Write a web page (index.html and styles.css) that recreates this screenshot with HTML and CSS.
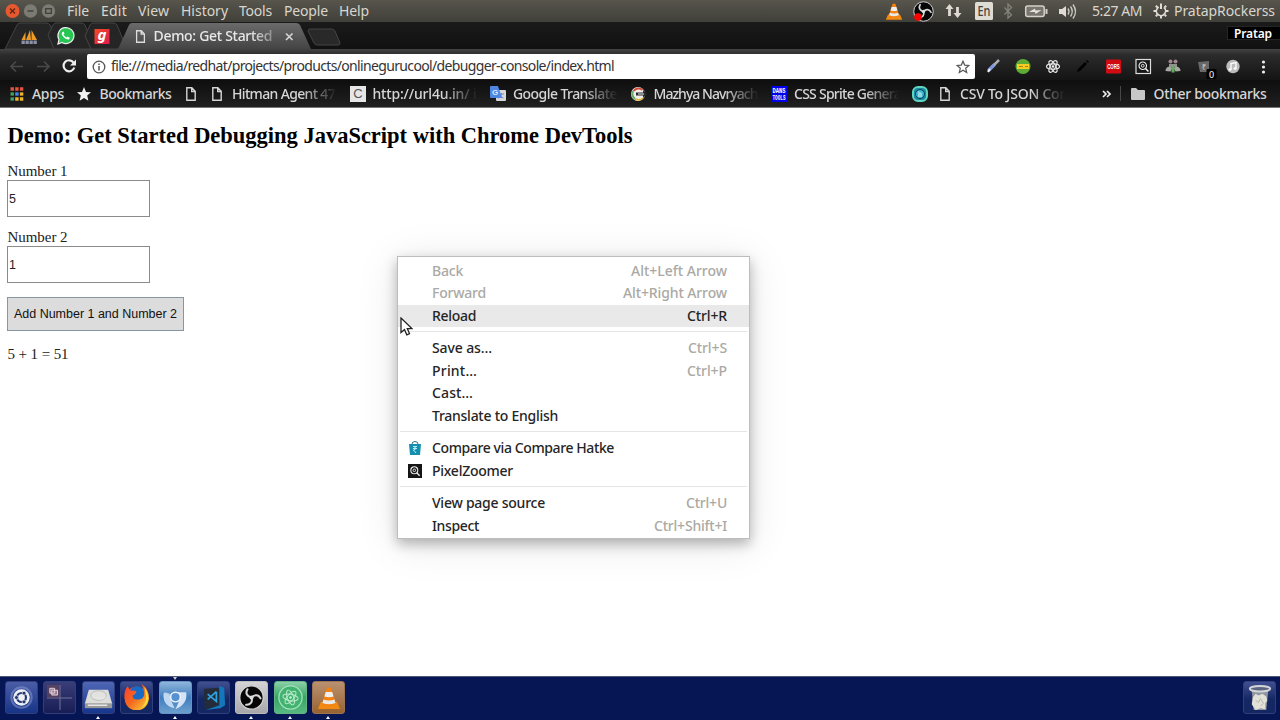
FILE: index.html
```html
<!DOCTYPE html>
<html lang="en">
<head>
<meta charset="utf-8">
<title>Demo: Get Started Debugging JavaScript with Chrome DevTools</title>
<link rel="stylesheet" href="styles.css">
</head>
<body>
<svg class="defs" width="0" height="0">
  <defs>
    <linearGradient id="tabfill" x1="0" y1="0" x2="0" y2="1"><stop offset="0" stop-color="#6b6b6b"/><stop offset="1" stop-color="#444"/></linearGradient>
    <linearGradient id="cream" x1="0" y1="0" x2="1" y2="1"><stop offset="0" stop-color="#ff3b2f"/><stop offset=".5" stop-color="#f36a20"/><stop offset="1" stop-color="#ffd83a"/></linearGradient>
    <linearGradient id="gaana" x1="0" y1="0" x2="1" y2="1"><stop offset="0" stop-color="#f04a23"/><stop offset="1" stop-color="#e01a52"/></linearGradient>
  </defs>
  <symbol id="file" viewBox="0 0 10 14"><path d="M.8.8h5L9.2 4.3v8.9H.8zM5.7.8v3.7h3.5" fill="none" stroke="currentColor" stroke-width="1.4"/></symbol>
  <symbol id="cone" viewBox="0 0 24 24"><path d="M4 16h16l3 7H1z" fill="#f28a12"/><path d="M10 2q2-1.5 4 0l5 16q-7 4-14 0z" fill="#f48110"/><path d="M8.8 6h6.4l1.4 4.5q-4.6 1.5-9.2 0z" fill="#eee"/><path d="M6.5 13.5q5.5 2 11 0l1 3.5q-6.500 2.500-13 0z" fill="#e8e8e4"/></symbol>
  <symbol id="obs" viewBox="0 0 28 28"><circle cx="14" cy="14" r="13" fill="#060606" stroke="#d5d5d5" stroke-width="1.3"/><g fill="none" stroke="#d6d6d6" stroke-width="2.300" stroke-linecap="round"><path d="M14 14C9 13 7 9 9.500 5M14 14C17.400 10.200 22 10.700 24 15M14 14C15.600 19 12.600 22.500 8 22"/></g><circle cx="14" cy="14" r="2.300" fill="#ddd"/></symbol>
  <symbol id="zoomer" viewBox="0 0 16 16"><circle cx="7.200" cy="7.200" r="4" fill="none" stroke="currentColor" stroke-width="1.200"/><circle cx="7.200" cy="7.200" r="1.500" fill="none" stroke="currentColor"/><path d="M10 10l3.300 3.300" stroke="currentColor" stroke-width="1.600"/></symbol>
</svg>

<header class="menubar">
  <svg class="winctl" width="60" height="22" viewBox="0 0 60 22">
    <circle cx="12.500" cy="11" r="7" fill="#e8582f"/><path d="M10 8.500l5 5m0-5l-5 5" stroke="#5e2614" stroke-width="1.300"/>
    <circle cx="30.500" cy="11" r="6.700" fill="#7c7b73"/><path d="M27.500 11h6" stroke="#3b3a36" stroke-width="1.300"/>
    <circle cx="48.500" cy="11" r="6.700" fill="#7c7b73"/><rect x="45.700" y="8.700" width="5.600" height="4.600" fill="none" stroke="#3b3a36" stroke-width="1.200"/>
  </svg>
  <nav class="menus">
    <span class="c34"><b data-w="22">File</b></span><span class="c37"><b data-w="26">Edit</b></span><span class="c43"><b data-w="31">View</b></span><span class="c58"><b data-w="47">History</b></span><span class="c45"><b data-w="33">Tools</b></span><span class="c55"><b data-w="44">People</b></span><span><b data-w="30">Help</b></span>
  </nav>
  <svg class="tray" width="200" height="22" viewBox="884 0 200 22">
    <use href="#cone" x="885" y="2" width="18" height="19"/>
    <use href="#obs" x="913" y="1" width="21" height="21"/><circle cx="918" cy="17" r="3.800" fill="#f00"/>
    <path d="M949.500 4l-4 5h2.600v7h2.800V9h2.600zM957.500 18l-4-5h2.600V7h2.800v6h2.600z" fill="#dfdbd2"/>
    <rect x="975" y="2" width="18" height="18" rx="1.500" fill="#dfdcd3"/><text x="984" y="16" text-anchor="middle" class="en" textLength="13" lengthAdjust="spacingAndGlyphs">En</text>
    <path d="M1004.500 7.500l7 7.500-3.500 3V4l3.500 3.500-7 7" fill="none" stroke="#858379" stroke-width="1.300"/>
    <rect x="1025.700" y="6" width="18.500" height="10.500" rx="2" fill="#77756d" stroke="#d4d1c8" stroke-width="1.500"/><path d="M1046.500 9v5" stroke="#d4d1c8" stroke-width="2"/><path d="M1029 12l6-3.500.5 2 6-.5-6 4-.5-2z" fill="#e5e2da"/>
    <path d="M1059 9h3l4-3v11l-4-3h-3z" fill="#dfdbd2"/><path d="M1068 8.500q2 3 0 6M1070.500 6.500q3.500 5 0 10M1073 4.500q5 7 0 14" fill="none" stroke="#cbc8bf" stroke-width="1.400"/>
  </svg>
  <span class="clock"><b data-w="50">5:27 AM</b></span>
  <svg class="gear" width="16" height="16" viewBox="-8 -8 16 16"><circle r="4.600" fill="none" stroke="#e0ddd5" stroke-width="1.700" stroke-dasharray="22.900 6" transform="rotate(-52)"/><path d="M0-7.500V-2M5.200-5.200l-1.500 1.500M-5.200-5.200l1.500 1.500M7.500 0H5M-7.500 0H-5M5.200 5.200L3.700 3.700M-5.200 5.200l1.500-1.500M0 7.500V5" stroke="#e0ddd5" stroke-width="2"/></svg>
  <span><b data-w="101">PratapRockerss</b></span>
</header>

<div class="tabstrip">
  <svg class="tabshapes" width="345" height="27" viewBox="0 22 345 27">
    <path d="M5 49L17 25q1-2 3-2h26q3 0 4 2l11 24z" fill="#252525" stroke="#454545"/>
    <path d="M48 35l5-10q1-2 3-2h25q3 0 4 2l10 24H54z" fill="#252525" stroke="#454545"/>
    <path d="M85 36l5-11q1-2 3-2h20q3 0 4 2l10 24H91z" fill="#252525" stroke="#454545"/>
    <path d="M118 49L129 25q1-2 3-2h164q3 0 4 2l11 24z" fill="url(#tabfill)"/>
    <path d="M310 29h22q2 0 3 2l5 12q0 2-2 2h-21q-2 0-3-2l-6-12q0-2 2-2z" fill="#292929" stroke="#454545"/>
    <path d="M21.500 40l4-8v8zm4.500 0l4-10 1 10zm5.500 0V30l5.500 10z" fill="#ed9a27"/><path d="M21.500 42.200h15.500" stroke="#8b91a8" stroke-width="3.500" stroke-dasharray="3.300 .7"/>
    <path d="M58 44l1-4.500a8 8 0 1 1 3 3z" fill="#27c653" stroke="#eee" stroke-width="1.200"/><path d="M62.500 32q-2 2 1 5t5.500 2.500l1-1.500-2.500-1.500-1 1q-2-1-3-3l1-1-1-2z" fill="#fff"/>
    <rect x="94.500" y="29" width="15" height="15" fill="url(#gaana)"/><text x="102" y="40" text-anchor="middle" class="g">g</text>
    <g color="#ddd"><use href="#file" x="135.500" y="30" width="10" height="13"/></g>
    <path d="M286 33.500l6.500 6.500m0-6.500l-6.500 6.500" stroke="#d4d4d4" stroke-width="1.700"/>
  </svg>
  <span class="tabtitle"><b data-w="122">Demo: Get Started </b></span>
  <span class="profile"><b data-w="38">Pratap</b></span>
</div>

<div class="toolbar">
  <svg width="87" height="31" viewBox="0 49 87 31"><path d="M23 66.500H11m5-5l-5 5 5 5M37 66.500h12m-5-5l5 5-5 5" fill="none" stroke="#494949" stroke-width="1.700"/><path d="M73.500 62.500a5.500 5.500 0 1 0 .8 5" fill="none" stroke="#eee" stroke-width="2.200"/><path d="M76 59.500v6h-6z" fill="#eee"/></svg>
  <div class="omnibox">
    <svg width="14" height="14" viewBox="0 0 14 14"><circle cx="7" cy="7" r="5.800" fill="none" stroke="#555" stroke-width="1.300"/><path d="M7 6v4.500M7 3.500v1.500" stroke="#555" stroke-width="1.500"/></svg>
    <span class="url"><b data-w="503">file:///media/redhat/projects/products/onlinegurucool/debugger-console/index.html</b></span>
    <svg width="14" height="14" viewBox="0 0 14 14"><path d="M7 1.200l1.700 3.900 4.200.4-3.200 2.800 1 4.200L7 10.300l-3.700 2.200 1-4.200L1.100 5.500l4.200-.4z" fill="none" stroke="#555" stroke-width="1.200"/></svg>
  </div>
  <svg width="305" height="31" viewBox="975 49 305 31">
    <path d="M989 70l5-5" stroke="#8298dc" stroke-width="3.400" stroke-linecap="round"/><path d="M994 65l5-5" stroke="#a9adb0" stroke-width="2.500"/><path d="M988 72l2-3" stroke="#f0f0ef" stroke-width="2"/>
    <circle cx="1023" cy="66.500" r="7.500" fill="#5dac35"/><rect x="1017" y="64" width="12" height="5" fill="#f6cc24"/><path d="M1019 66.500h4m2 0h3" stroke="#a08518"/>
    <g fill="none" stroke="#e2e2e2" stroke-width="1.200"><ellipse cx="1053" cy="66.500" rx="6.500" ry="2.600"/><ellipse cx="1053" cy="66.500" rx="6.500" ry="2.600" transform="rotate(60 1053 66.500)"/><ellipse cx="1053" cy="66.500" rx="6.500" ry="2.600" transform="rotate(120 1053 66.500)"/></g><circle cx="1053" cy="66.500" r="1.300" fill="#eee"/>
    <path d="M1077 72l1-3 7-7 2 2-7 7zM1086 61l1-1 2 2-1 1z" fill="#000"/>
    <rect x="1106" y="59.500" width="15" height="14" rx="1" fill="#d00c12"/><text x="1113.500" y="69" text-anchor="middle" textLength="12.500" lengthAdjust="spacingAndGlyphs" class="cors">CORS</text>
    <rect x="1136" y="59.500" width="14.500" height="14" fill="#171717" stroke="#ddd" stroke-width="1.200"/><g color="#eee"><use href="#zoomer" x="1136" y="59" width="15" height="15"/></g>
    <circle cx="1170.500" cy="61.500" r="2" fill="#a3858e"/><circle cx="1175.500" cy="61.500" r="2" fill="#a3858e"/><path d="M1169 64h8v3h-8z" fill="#8d9488"/><path d="M1165.500 71q0-4 4-4.500l3 1.500-2 3.500zM1180.500 71q0-4-4-4.500l-3 1.500 2 3.500z" fill="#a5a9a1"/><path d="M1173 67v5.500" stroke="#62ad5b" stroke-width="3"/>
    <path d="M1198 62l11-1v11h-9z" fill="#686868"/><text x="1204" y="70" text-anchor="middle" class="rupee">₹</text><rect x="1206.500" y="69" width="10" height="10" rx="1" fill="#000"/><text x="1211.500" y="77.500" text-anchor="middle" class="count">0</text>
    <circle cx="1233" cy="66.500" r="6.700" fill="#bcbcbc"/><path d="M1231 69.500v-6l5-1v6" fill="none" stroke="#fff" stroke-width="1.300"/><ellipse cx="1230" cy="69.500" rx="1.500" ry="1.200" fill="#fff"/><ellipse cx="1235" cy="68.500" rx="1.500" ry="1.200" fill="#fff"/>
    <g fill="#eee"><circle cx="1263.500" cy="62" r="1.600"/><circle cx="1263.500" cy="67" r="1.600"/><circle cx="1263.500" cy="72" r="1.600"/></g>
  </svg>
</div>

<div class="bookmarks">
  <svg class="m8" width="14" height="14" viewBox="0 0 14 14"><path d="M.5 2h13" stroke="#e5533c" stroke-width="3.300" stroke-dasharray="3.400 1.300"/><path d="M.5 7h3.400" stroke="#3ea55d" stroke-width="3.300"/><path d="M5.200 7h3.400" stroke="#4587f3" stroke-width="3.300"/><path d="M.5 12h3.400" stroke="#3ea55d" stroke-width="3.300"/><path d="M5.200 12h8.100" stroke="#edb529" stroke-width="3.300" stroke-dasharray="3.400 1.300"/><path d="M9.900 7h3.400" stroke="#edb529" stroke-width="3.300"/></svg>
  <span class="c45"><b data-w="32">Apps</b></span>
  <svg class="m8" width="14" height="14" viewBox="0 0 14 14"><path d="M7 0l2 4.900 5 .4-3.800 3.300 1.200 5.200L7 11 2.600 13.800l1.200-5.200L0 5.300l5-.4z" fill="#f2f2f2"/></svg>
  <span class="c86"><b data-w="72">Bookmarks</b></span>
  <svg class="m16" width="10" height="14"><use href="#file"/></svg>
  <svg class="m10" width="10" height="14"><use href="#file"/></svg>
  <span class="c118 fade"><b data-w="103">Hitman Agent 47</b></span>
  <svg class="m7" width="16" height="16"><rect width="16" height="16" fill="#e6e6e6"/><text x="8" y="12" text-anchor="middle" class="cc">C</text></svg>
  <span class="c118 fade"><b data-w="104">http://url4u.in/ i</b></span>
  <svg class="m7" width="16" height="16" viewBox="0 0 16 16"><rect x="6" y="4" width="10" height="11" rx="1" fill="#d7d7d7"/><path d="M9 8h5m-2.500-1v1q0 3-3 4m1-3q1 2 4 3" stroke="#788bb1" fill="none"/><path d="M1 0h7l4 12H1q-1 0-1-1V1q0-1 1-1z" fill="#4e86e4"/><text x="5" y="9" text-anchor="middle" class="gg">G</text></svg>
  <span class="c118 fade"><b data-w="104">Google Translate</b></span>
  <svg class="m7" width="16" height="16" viewBox="0 0 16 16"><circle cx="7" cy="8" r="7" fill="#eee"/><path d="M11.500 4a6 6 0 0 0-9 1" fill="none" stroke="#d34b35" stroke-width="2"/><path d="M2 5q-2 5 2 8" fill="none" stroke="#65aa66" stroke-width="2"/><path d="M4 13q5 2 8-1" fill="none" stroke="#e7b52d" stroke-width="1.500"/><path d="M5 6.500h7V4l4 4-4 4V9.500H5z" fill="#282828"/><path d="M7 8h6" stroke="#eee"/></svg>
  <span class="c118 fade"><b data-w="104">Mazhya Navryach</b></span>
  <svg class="m7 dans" width="16" height="16"><rect width="16" height="16" fill="#0000ea"/><text x="8" y="7.200" textLength="13" lengthAdjust="spacingAndGlyphs" text-anchor="middle" class="dt">DANS</text><text x="8" y="14" textLength="13" lengthAdjust="spacingAndGlyphs" text-anchor="middle" class="dt">TOOLS</text></svg>
  <span class="c118 fade"><b data-w="107">CSS Sprite Genera</b></span>
  <svg class="m12" width="16" height="16" viewBox="0 0 16 16"><rect x="1" y="1" width="14" height="14" rx="5" fill="#168ba5" stroke="#62d5be" stroke-width="2"/><circle cx="8" cy="8" r="4.500" fill="#38b5d1" stroke="#103d52"/><path d="M6 5l4 2v4H6z" fill="#8fd6e4"/></svg>
  <svg class="m10" width="10" height="14"><use href="#file"/></svg>
  <span class="c142 fade"><b data-w="108">CSV To JSON Con</b></span>
  <svg class="chev" width="10" height="10" viewBox="0 0 10 10"><path d="M1 2l3 3-3 3m4-6l3 3-3 3" fill="none" stroke="#eee" stroke-width="1.700"/></svg>
  <i class="sep"></i>
  <svg class="m8" width="14" height="12" viewBox="0 0 14 12"><path d="M0 1q0-1 1-1h4l2 2h6q1 0 1 1v8q0 1-1 1H1q-1 0-1-1z" fill="#c8c8c8"/></svg>
  <span><b data-w="113">Other bookmarks</b></span>
</div>

<main class="page">
  <h1><b data-w="625">Demo: Get Started Debugging JavaScript with Chrome DevTools</b></h1>
  <label><b data-w="60">Number 1</b></label>
  <input value="5">
  <label><b data-w="60">Number 2</b></label>
  <input value="1">
  <button><b data-w="163">Add Number 1 and Number 2</b></button>
  <p><b data-w="61">5 + 1 = 51</b></p>
</main>

<div class="ctx">
  <div class="row off"><b data-w="31">Back</b><b data-w="96">Alt+Left Arrow</b></div>
  <div class="row off"><b data-w="54">Forward</b><b data-w="104">Alt+Right Arrow</b></div>
  <div class="row hot"><b data-w="44">Reload</b><b data-w="40">Ctrl+R</b></div>
  <hr>
  <div class="row"><b data-w="60">Save as…</b><b data-w="39">Ctrl+S</b></div>
  <div class="row"><b data-w="45">Print…</b><b data-w="40">Ctrl+P</b></div>
  <div class="row"><b data-w="41">Cast…</b></div>
  <div class="row"><b data-w="126">Translate to English</b></div>
  <hr>
  <div class="row ic"><svg width="14" height="14" viewBox="0 0 14 14"><path d="M1 3h12l-1 11H2z" fill="#168fae"/><path d="M4 3q0-2.500 3-2.500T10 3" fill="none" stroke="#356b7c"/><path d="M5 5.500h4M5 7.500h4M5.500 5.500q5 2 0 3.500L8 12" fill="none" stroke="#b2eff5"/></svg><b data-w="182">Compare via Compare Hatke</b></div>
  <div class="row ic"><svg width="14" height="14" viewBox="0 0 16 16" color="#eee"><rect width="16" height="16" fill="#151515"/><use href="#zoomer" width="16" height="16"/></svg><b data-w="81">PixelZoomer</b></div>
  <hr>
  <div class="row"><b data-w="113">View page source</b><b data-w="41">Ctrl+U</b></div>
  <div class="row"><b data-w="47">Inspect</b><b data-w="73">Ctrl+Shift+I</b></div>
</div>
<svg class="cursor" width="13" height="20" viewBox="0 0 13 20"><path d="M1 1v14.500l3.500-3 2.300 5.300 2.700-1.200-2.200-5h4.600z" fill="#fff" stroke="#222" stroke-width="1.300"/></svg>

<footer class="dock">
  <div class="tile ubuntu"><svg viewBox="0 0 32 32"><circle cx="16" cy="16" r="10.500" fill="none" stroke="#8ea0d3" opacity=".5" stroke-width="2"/><circle cx="16" cy="16" r="8.500" fill="#f0f1f6"/><circle cx="16" cy="16" r="4.600" fill="none" stroke="#21366f" stroke-width="2.200"/><g fill="#21366f" stroke="#f0f1f6" stroke-width=".7"><circle cx="10.800" cy="16" r="2"/><circle cx="18.600" cy="11.500" r="2"/><circle cx="18.600" cy="20.500" r="2"/></g></svg></div>
  <div class="tile work"><svg viewBox="0 0 32 32"><path d="M16.500 3v26M3 16.500h26" stroke="#77759a"/><rect x="3" y="3" width="13" height="13" fill="#64475d" opacity=".7"/><path d="M6 6.500h5v5H6zM8 8.500h6v5H8z" fill="#987b91" stroke="#e1d0da"/></svg></div>
  <div class="tile drive"><svg viewBox="0 0 32 32"><path d="M6 8h20l4 14v4H2v-4z" fill="#ddddda"/><path d="M2 22h28v5H2z" fill="#989996"/><ellipse cx="16" cy="14" rx="8" ry="5" fill="#e2e2df" stroke="#bbb"/><path d="M14 16q6 3 9-1M5 24h20" fill="none" stroke="#e7e7e7" stroke-width="1.500"/></svg><i></i></div>
  <div class="tile"><svg viewBox="0 0 32 32"><circle cx="16" cy="17" r="12" fill="url(#cream)"/><circle cx="16.500" cy="13" r="8.500" fill="#186ac7"/><path d="M3.500 16Q3 9 7 4q1 3 3 5 4-1 6 1-1 3-4 4 0 5 6 4 6 0 6-7-1-6-3-9 8 5 8 15-2 12-13 12T3.500 16z" fill="url(#cream)"/><path d="M24 5q4 5 4 12-1 7-7 10 5-5 5-12z" fill="#ffdd3c"/></svg></div>
  <div class="tile chromium"><i class="top"></i><svg viewBox="0 0 32 32"><path d="M4 11q4-1 8 2l-1 8 3 6Q2 23 4 11z" fill="#9bbfe9"/><path d="M4 11q7 0 8 9l3 7Q2 24 4 11z" fill="#c0d8f2"/><path d="M16 10.500h11q2 12-11 17.500l4-9z" fill="#d4e4f6"/><circle cx="16" cy="15.500" r="5" fill="#5590cf" stroke="#edf3fc" stroke-width="1.500"/></svg><i></i></div>
  <div class="tile code"><svg viewBox="0 0 32 32"><path d="M6 7l16-1v19L7 28z" fill="#232c38"/><path d="M22 4l5 2 1 18-5 3-15 2 14-5z" fill="#1477bb"/><path d="M19 10v10l-9-7.500m0 5.500l9-8" fill="none" stroke="#2fa2e1" stroke-width="1.800"/></svg></div>
  <div class="tile obs"><svg viewBox="0 0 32 32"><use href="#obs" x="3" y="3" width="26" height="26"/></svg><i></i></div>
  <div class="tile atom"><svg viewBox="0 0 32 32"><circle cx="16" cy="16" r="12" fill="#41b36f" stroke="#a4e1bf" stroke-width="1.300"/><g fill="none" stroke="#bdebcf"><ellipse cx="16" cy="16" rx="8" ry="3.300" transform="rotate(10 16 16)"/><ellipse cx="16" cy="16" rx="8" ry="3.300" transform="rotate(70 16 16)"/><ellipse cx="16" cy="16" rx="8" ry="3.300" transform="rotate(130 16 16)"/></g><circle cx="16" cy="16" r="1.300" fill="#c7f1d8"/></svg><i></i></div>
  <div class="tile vlc"><svg viewBox="0 0 32 32"><use href="#cone" x="4" y="4" width="25" height="25"/></svg><i></i></div>
  <div class="tile trash"><svg viewBox="0 0 32 32"><path d="M8 9h17l-2 20H10z" fill="#8f95a1"/><path d="M9 16l3-4 3 2 4-2 4 3 1 4-2 3v6l-5-1-5 2-2-3-2-3z" fill="#e2e1d8"/><path d="M12 19l3 2 2-4 3 5-3 3" fill="none" stroke="#b8b7ad"/><ellipse cx="16.500" cy="7" rx="10.500" ry="2.800" fill="#5b657f" stroke="#d3d5d6" stroke-width="2"/></svg></div>
</footer>
<script src="labels.js"></script>
</body>
</html>
```

FILE: styles.css
```css
* { box-sizing: border-box; }
body { margin: 0; width: 1280px; height: 720px; overflow: hidden; display: flex; flex-direction: column; background: #fff; font-family: "Noto Sans", sans-serif; font-size: 14px; position: relative; }
b { font-weight: inherit; white-space: pre; display: inline-block; }
svg { display: block; flex: none; }
.defs { position: absolute; }
.menubar { height: 22px; flex: none; display: flex; align-items: center; line-height: 22px; color: #d9d6cd; background: linear-gradient(#57554c, #403f39); }
.winctl { margin-right: 7px; }
.menus { display: flex; width: 817px; flex: none; }
.menus span, .bookmarks span { flex: none; }
.c34 { width: 34px; }
.c37 { width: 37px; }
.c43 { width: 43px; }
.c45 { width: 45px; }
.c55 { width: 55px; }
.c58 { width: 58px; }
.c86 { width: 86px; }
.c118 { width: 117.500px; }
.c142 { width: 142px; }
.en { font: 500 14px "Noto Sans", sans-serif; fill: #44433e; }
.clock { width: 69px; padding-left: 8px; flex: none; }
.gear { margin-right: 5px; }
.tabstrip { height: 27px; flex: none; background: linear-gradient(#1a1a1a, #111); position: relative; display: flex; justify-content: space-between; align-items: center; color: #e8e8e8; }
.tabshapes { position: absolute; left: 0; top: 0; }
.g { font: italic bold 15px "Noto Sans", sans-serif; fill: #fff; }
.tabtitle { margin-left: 153.500px; position: relative; line-height: 27px; font-weight: 500; -webkit-mask-image: linear-gradient(90deg, #000 80%, rgba(0,0,0,.3)); }
.profile { align-self: flex-start; margin-top: 4px; width: 53px; height: 14px; border: 1px solid #252525; border-right: 0; background: #000; color: #fff; font-size: 12px; font-weight: 600; line-height: 13px; padding-left: 6px; }
.toolbar { height: 31px; flex: none; display: flex; background: linear-gradient(#434343, #2b2b2b 6px, #141414); }
.omnibox { width: 888px; height: 25px; margin-top: 5px; background: #fff; border-radius: 2px; display: flex; align-items: center; padding: 0 5px; color: #333; }
.url { flex: 1; padding: 0 0 1px 5px; line-height: 24px; }
.cors { font: bold 7px "Liberation Sans", sans-serif; fill: #fff; }
.rupee { font: 8px "Noto Sans", sans-serif; fill: #ccc; }
.count { font: 9px "Noto Sans", sans-serif; fill: #fff; }
.bookmarks { height: 28px; flex: none; display: flex; align-items: center; padding-left: 9.500px; line-height: 26px; color: #d6d6d6; background: linear-gradient(#0e0e0e, #202020); border-bottom: 1px solid #777; }
.bookmarks span { font-weight: 500; }
.m7 { margin-right: 7px; }
.m8 { margin-right: 8.500px; }
.m10 { margin-right: 10.500px; }
.m12 { margin-right: 12px; }
.m16 { margin-right: 16px; }
.fade { overflow: hidden; -webkit-mask-image: linear-gradient(90deg, #000 70px, transparent 105px); }
.cc { font: 13px "Liberation Sans", sans-serif; fill: #555; }
.gg { font: bold 8px "Liberation Sans", sans-serif; fill: #dce9ff; }
.dans { overflow: visible; }
.dt { font: bold 6.500px "Liberation Mono", monospace; fill: #fff; }
.chev { margin-right: 8px; }
.sep { width: 1px; height: 15px; background: #484848; margin-right: 10px; }
.page { height: 568px; flex: none; padding: 0 7px; font-family: "Liberation Serif", serif; font-size: 15px; color: #222; display: flex; flex-direction: column; align-items: flex-start; }
.page h1 { margin: 14px 0 13px .500px; font-size: 22.500px; line-height: 27px; font-weight: bold; color: #000; }
.page label { line-height: 18px; padding-left: .500px; }
.page input { width: 143px; height: 37px; margin: 0 0 11.400px; border: 1px solid #8b8b8b; padding: 0 1px; font: 12.500px "Liberation Sans", sans-serif; color: #222; background: #fff; border-radius: 0; }
.page button { width: 177px; height: 34px; margin-top: 2px; border: 1px solid #8796a3; background: #dcdcdc; border-radius: 0; padding: 0; font: 12.500px "Liberation Sans", sans-serif; color: #111; }
.page p { margin: 13px 0 0 .500px; line-height: 20px; }
.ctx { position: absolute; left: 397px; top: 256px; width: 353px; height: 283px; border: 1px solid #bdbdbd; background: #fff; padding: 2.500px 0; box-shadow: 0 5px 12px rgba(0,0,0,.28), 0 5px 40px rgba(0,0,0,.10); color: #252525; font-weight: 500; }
.row { height: 22.500px; line-height: 22px; display: flex; justify-content: space-between; padding: 0 22px 0 34px; }
.row b + b { color: #aaa9a4; }
.off { color: #aaa9a4; }
.hot { background: #e9e9e9; }
.hot b + b { color: #252525; }
.ic { justify-content: flex-start; align-items: center; padding-left: 10px; gap: 10px; }
.ctx hr { margin: 4px 2px 5px; height: 1px; border: 0; background: #e5e5e5; }
.ctx hr + .row { margin-top: .500px; }
.cursor { position: absolute; left: 400px; top: 317px; }
.dock { height: 44px; flex: none; display: flex; gap: 5.400px; padding: 4px 5px 0; background: #061654; border-top: 1px solid #4d5674; }
.tile { width: 33px; height: 33px; flex: none; border-radius: 3px; position: relative; background: linear-gradient(#414f91, #152864 55%, #142763); border: 1px solid #303f7b; }
.tile svg { width: 31px; height: 31px; }
.tile i { position: absolute; left: 13px; bottom: -6px; border: 2px solid transparent; border-bottom: 3px solid #fff; border-top: 0; }
.tile .top { top: -5px; bottom: auto; border-top: 3px solid #ccc; border-bottom: 0; }
.ubuntu { background: linear-gradient(#4b5da6, #173487); }
.work { background: linear-gradient(#393e79, #181d55); }
.drive { background: linear-gradient(#5066b5, #16378e); }
.chromium { background: linear-gradient(#8fb5dc, #407ebd 50%, #6c9fce); border-color: #6793c3; }
.obs { background: linear-gradient(#d3d3d5, #a7a7ab); border-color: #bbb; }
.atom { background: linear-gradient(#8cd0a7, #36a563 50%, #58b980); border-color: #61b583; }
.vlc { background: linear-gradient(#b99170, #996331); border-color: #9b744f; }
.trash { margin-left: auto; margin-right: -1px; }
```

FILE: labels.js
```js
// Track each label so that it fills its nominal width.
document.querySelectorAll('b[data-w]').forEach(function (el) {
  var want = parseFloat(el.dataset.w);
  var have = el.getBoundingClientRect().width;
  el.style.letterSpacing = ((want - have) / el.textContent.length).toFixed(3) + 'px';
});
```
